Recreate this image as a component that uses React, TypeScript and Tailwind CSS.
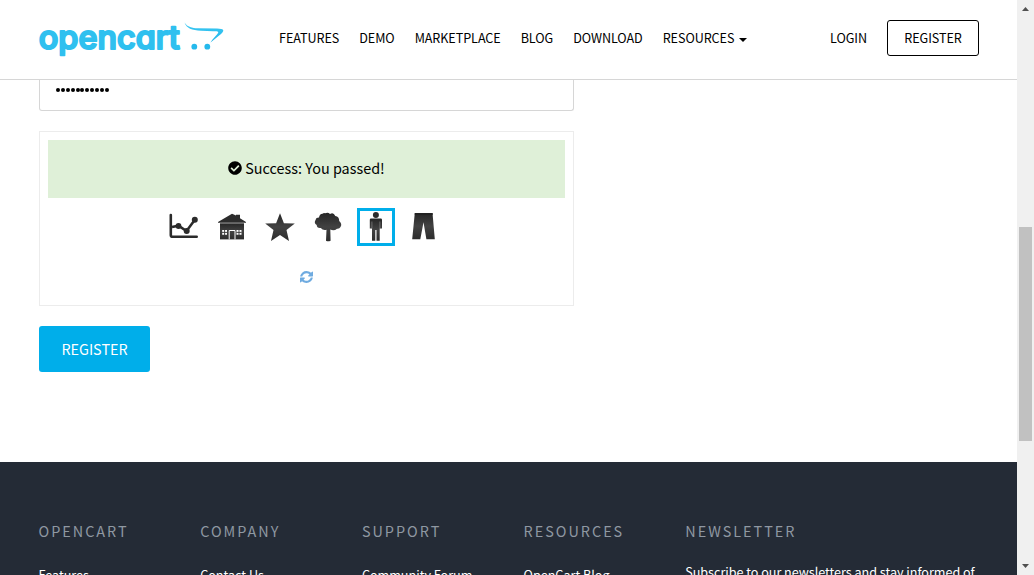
import { FaCheckCircle } from "react-icons/fa";

const navItems = ["FEATURES", "DEMO", "MARKETPLACE", "BLOG", "DOWNLOAD"];

const footerColumns = [
  { title: "OPENCART", link: "Features" },
  { title: "COMPANY", link: "Contact Us" },
  { title: "SUPPORT", link: "Community Forum" },
  { title: "RESOURCES", link: "OpenCart Blog" },
];

function Logo() {
  return (
    <svg width="187" height="40" viewBox="0 0 187 40" className="block shrink-0" role="img" aria-label="opencart">
      <defs>
        <linearGradient id="brand" x1="0" y1="0" x2="0" y2="1">
          <stop offset="0" stopColor="#3fcaf3" />
          <stop offset="1" stopColor="#20b5ea" />
        </linearGradient>
      </defs>
      <text
        x="0.8"
        y="27.6"
        textLength="141"
        lengthAdjust="spacingAndGlyphs"
        fill="#2fc0ef"
        stroke="#2fc0ef"
        strokeWidth="2.1"
        strokeLinejoin="round"
        className="font-['Inter',sans-serif] text-[32px] font-medium [font-feature-settings:'cv11']"
      >
        opencart
      </text>
      <path
        d="M146.500 1.500C149.500 6.300 154 7 160 7.300L179 7.600C186 7.800 187 9.500 183 13L172.500 21.500C175 17.500 179 13.800 180 12C181 10.300 179 10.200 175 10.200L163 9.700C154 9.200 148.500 7.500 146.500 1.500Z"
        fill="url(#brand)"
      />
      <circle cx="156.300" cy="25.700" r="2.900" fill="#25b9ec" />
      <circle cx="169.300" cy="25.700" r="2.900" fill="#25b9ec" />
    </svg>
  );
}

function ChartIcon() {
  return (
    <svg width="32" height="32" viewBox="0 0 32 32" fill="none" stroke="#2b2b2b">
      <path d="M2.800 4V24.200Q2.800 25.800 5 25.800H28.700" strokeWidth="2.600" strokeLinecap="round" />
      <path d="M4 16L10.500 14.700L18.500 20L26.700 9" strokeWidth="2.500" />
      <g fill="#2b2b2b" stroke="none">
        <circle cx="10.500" cy="15" r="2.900" />
        <circle cx="18.700" cy="20" r="3" />
        <circle cx="26.800" cy="8.800" r="3" />
      </g>
    </svg>
  );
}

function HouseIcon() {
  return (
    <svg width="32" height="32" viewBox="0 0 32 32">
      <path d="M2 10.900L16 2.800L20 4.600V3.800H24V7.200L30 10.900V11.700H2Z" fill="#2c2c2c" />
      <path d="M4 12.300H28V28.400H4Z" fill="url(#ink)" />
      <path d="M13.200 28.400V19.500H19V28.400" fill="none" stroke="#fff" strokeWidth="1" />
      <path d="M6.200 19H11V23.800H6.200ZM20.500 19H25.500V23.800H20.500Z" fill="#fff" />
      <path d="M8.600 18.700V24M23 18.700V24M6 21.400H11.200M20.300 21.400H25.700" stroke="#333" strokeWidth="0.900" />
    </svg>
  );
}

function StarIcon() {
  return (
    <svg width="32" height="32" viewBox="0 0 32 32">
      <path d="M16 2.200L19.900 12.200L30.800 12.500L22.500 18.900L25 29.900L16 24L7 29.900L9.500 18.900L1.200 12.500L12.100 12.200Z" fill="url(#ink)" />
    </svg>
  );
}

function TreeIcon() {
  return (
    <svg width="32" height="32" viewBox="0 0 32 32">
      <path
        d="M13 2.300Q16 0.800 18 3Q21.500 0.800 23.300 5Q27.300 5.500 27.200 10Q30.500 13 28.500 16Q27.500 18 25 17.700Q22 20.500 18.300 18.500L18.600 29.700Q16 30.800 14 29.700L14.500 18.800Q11 19.800 8.800 17Q4.800 17.500 4.700 14Q1.500 12 3.700 8.800Q4 6.500 7 6.500Q7.500 3 10.500 2.800Q12 1.500 13 2.300Z"
        fill="url(#ink)"
      />
    </svg>
  );
}

function ManIcon() {
  return (
    <svg width="32" height="32" viewBox="0 0 32 32">
      <circle cx="15.900" cy="4" r="3" fill="#2b2b2b" />
      <path d="M11 7.600H20.800Q22 7.600 22 8.800V17.500H19.700V29.700H16.500V19H15.300V29.700H12V17.500H9.800V8.800Q9.800 7.600 11 7.600Z" fill="url(#ink)" />
      <path d="M11.900 10.500V17.500M19.900 10.500V17.500" stroke="#aaa" strokeWidth="0.500" />
    </svg>
  );
}

function TrousersIcon() {
  return (
    <svg width="32" height="32" viewBox="0 0 32 32">
      <path d="M6.800 2H24.500L26.800 28.300H18.400L15.500 11.300L12.300 28.300H4.200Z" fill="url(#ink)" />
      <path d="M6.800 3H24.600" stroke="#222" strokeWidth="2" />
    </svg>
  );
}

function RefreshIcon() {
  return (
    <svg width="13" height="12" viewBox="0 128 1536 1408" preserveAspectRatio="none" fill="#6fabe0">
      <path d="M1511 928q0 5-1 7q-64 268-268 434.500t-478 166.500q-146 0-282.500-55t-243.500-157l-129 129q-19 19-45 19t-45-19t-19-45v-448q0-26 19-45t45-19h448q26 0 45 19t19 45t-19 45l-137 137q71 66 161 102t187 36q134 0 250-65t186-179q11-17 53-117q8-23 30-23h192q13 0 22.500 9.500t9.500 22.500zM1536 256v448q0 26-19 45t-45 19h-448q-26 0-45-19t-19-45t19-45l138-138q-148-137-349-137q-134 0-250 65t-186 179q-11 17-53 117q-8 23-30 23h-199q-13 0-22.500-9.500t-9.500-22.500v-7q65-268 270-434.500t480-166.500q146 0 284 55.500t245 156.500l130-129q19-19 45-19t45 19t19 45z" />
    </svg>
  );
}

const captchaIcons = [ChartIcon, HouseIcon, StarIcon, TreeIcon, ManIcon, TrousersIcon];

function Header() {
  return (
    <header className="flex h-20 shrink-0 items-start border-b border-[#d6d6d6] bg-white px-[38px]">
      <div className="pt-[21px]">
        <Logo />
      </div>
      <nav className="ml-[54px] flex gap-5 pt-[28px] text-[12.6px] leading-5 tracking-[-0.07px]">
        {navItems.map((item) => (
          <a key={item}>{item}</a>
        ))}
        <a className="flex items-center">
          RESOURCES
          <span className="ml-[5px] mt-[3px] border-x-4 border-t-4 border-x-transparent border-t-black" />
        </a>
      </nav>
      <div className="ml-auto flex text-[12.6px] leading-5 tracking-[-0.07px]">
        <a className="mr-5 pt-[28px]">LOGIN</a>
        <a className="mt-5 flex h-9 w-[92px] justify-center rounded-[3px] border border-black pt-[7px]">REGISTER</a>
      </div>
    </header>
  );
}

function Captcha() {
  return (
    <section className="mt-5 h-[175px] w-[535px] border border-[#ececec] p-2">
      <div className="flex h-[58px] items-center justify-center gap-[3px] bg-[#dff0d8] pb-[2px] text-[14.4px] leading-5">
        <FaCheckCircle size={14} />
        <span>Success: You passed!</span>
      </div>
      <div className="ml-[117px] mt-[10px] flex gap-[10px]">
        {captchaIcons.map((Icon, index) => (
          <div
            key={index}
            className={
              index === 4
                ? "flex size-[38px] items-center justify-center border-3 border-[#00aeea]"
                : "flex size-[38px] items-center justify-center border-3 border-transparent"
            }
          >
            <Icon />
          </div>
        ))}
      </div>
      <div className="mt-[25px] flex justify-center">
        <RefreshIcon />
      </div>
    </section>
  );
}

function Footer() {
  return (
    <footer className="mt-[90px] flex h-[113px] shrink-0 overflow-hidden bg-[#242b36] pl-[38.500px] pt-[59px] text-white">
      {footerColumns.map((column) => (
        <div key={column.title} className="w-[161.700px] shrink-0">
          <h3 className="text-[14.4px] leading-5 tracking-[2px] text-[#8f98a2]">{column.title}</h3>
          <p className="mt-6 whitespace-nowrap text-[12.6px] leading-5">{column.link}</p>
        </div>
      ))}
      <div className="shrink-0">
        <h3 className="text-[14.4px] leading-5 tracking-[2px] text-[#8f98a2]">NEWSLETTER</h3>
        <p className="mt-[21px] whitespace-nowrap text-[12.6px] leading-5 tracking-[-0.02px]">
          Subscribe to our newsletters and stay informed of
        </p>
      </div>
    </footer>
  );
}

function Scrollbar() {
  return (
    <aside className="flex w-[17px] shrink-0 flex-col items-center bg-[#f0f0f0]">
      <svg width="17" height="17" viewBox="0 0 17 17" fill="#505050">
        <path d="M5 11L8.500 7L12 11Z" />
      </svg>
      <div className="mt-[210px] h-[214px] w-[13px] bg-[#c1c1c1]" />
      <svg width="17" height="17" viewBox="0 0 17 17" fill="#505050" className="mt-auto">
        <path d="M5 6L8.500 10L12 6Z" />
      </svg>
    </aside>
  );
}

export default function App() {
  return (
    <div className="flex h-[575px] w-[1034px] overflow-hidden bg-white font-['Noto_Sans_CJK_JP',sans-serif] text-black">
      <svg width="0" height="0" className="absolute">
        <defs>
          <linearGradient id="ink" x1="0" y1="0" x2="0" y2="1">
            <stop offset="0" stopColor="#262626" />
            <stop offset="0.5" stopColor="#424242" />
            <stop offset="1" stopColor="#2c2c2c" />
          </linearGradient>
        </defs>
      </svg>
      <div className="flex w-[1017px] flex-col">
        <Header />
        <main className="pl-[39px]">
          <div className="flex h-[31px] w-[535px] items-start rounded-b-[3px] border border-t-0 border-[#d6d6d6] pl-4 pt-2">
            <div className="flex gap-[0.900px]" aria-label="Password">
              {Array.from({ length: 11 }, (_, index) => (
                <span key={index} className="h-1 w-1 rounded-full bg-black" />
              ))}
            </div>
          </div>
          <Captcha />
          <button className="mt-5 block h-[46px] w-[111px] rounded-[3px] bg-[#00aeea] text-[14.4px] leading-5 text-white">
            REGISTER
          </button>
        </main>
        <Footer />
      </div>
      <Scrollbar />
    </div>
  );
}
